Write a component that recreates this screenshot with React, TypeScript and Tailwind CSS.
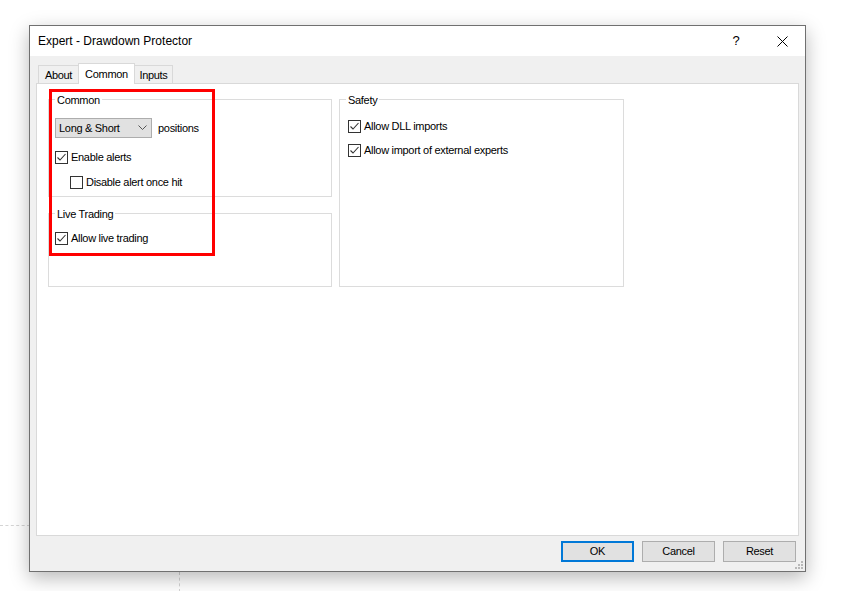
const font = "font-['Liberation_Sans',Arial,sans-serif]";

function CheckBox({ checked, label }: { checked?: boolean; label: string }) {
  return (
    <div className="flex items-center h-[13px]">
      <div className="w-[13px] h-[13px] border border-[#333333] bg-white flex items-center justify-center shrink-0">
        {checked && (
          <svg width="11" height="11" viewBox="0 0 11 11">
            <polyline points="1.5,5.5 4,8 9.5,2" fill="none" stroke="#333333" strokeWidth="1.1" />
          </svg>
        )}
      </div>
      <span className="ml-[3px] text-[11px] tracking-[-0.3px] text-black leading-none">{label}</span>
    </div>
  );
}

function GroupBox({
  title,
  className,
  children,
}: {
  title: string;
  className?: string;
  children?: React.ReactNode;
}) {
  return (
    <div className={"relative border border-[#dcdcdc] " + (className ?? "")}>
      <span className="absolute -top-[6px] left-[6px] bg-white px-[2px] text-[11px] tracking-[-0.3px] leading-[13px] text-black">
        {title}
      </span>
      {children}
    </div>
  );
}

export default function App() {
  return (
    <div className={"relative w-[863px] h-[591px] bg-white overflow-hidden " + font}>
      {/* desktop guide lines behind the dialog */}
      <div className="absolute left-0 top-[525px] w-[30px] border-t border-dashed border-[#d4d4d4]" />
      <div className="absolute left-[179px] top-[572px] h-[20px] border-l border-dashed border-[#d4d4d4]" />

      <div className="relative ml-[29px] mt-[25px] w-[777px] h-[547px] border border-[#707070] bg-[#f0f0f0] flex flex-col shadow-[0_6px_18px_rgba(0,0,0,0.28)]">
        {/* title bar */}
        <div className="h-[30px] bg-white flex items-center shrink-0">
          <span className="ml-[8px] text-[12px] text-black">Expert - Drawdown Protector</span>
          <div className="ml-auto flex items-center">
            <span className="w-[46px] text-center text-[13px] text-black">?</span>
            <div className="w-[46px] flex justify-center">
              <svg width="11" height="11" viewBox="0 0 11 11">
                <path d="M0.5 0.5 L10.5 10.5 M10.5 0.5 L0.5 10.5" stroke="#000" strokeWidth="1" />
              </svg>
            </div>
          </div>
        </div>

        {/* tabs */}
        <div className="flex items-end pt-[7px] pl-[8px] h-[27px] shrink-0">
          <div className="w-[41px] h-[18px] border border-b-0 border-[#d9d9d9] bg-[#f0f0f0] flex items-center justify-center pt-[1px] text-[11px] tracking-[-0.3px]">
            About
          </div>
          <div className="relative z-10 -ml-px w-[57px] h-[21px] -mb-px border border-b-0 border-[#d9d9d9] bg-white flex justify-center pt-[2px] text-[11px] tracking-[-0.3px]">
            Common
          </div>
          <div className="-ml-px w-[39px] h-[18px] border border-b-0 border-[#d9d9d9] bg-[#f0f0f0] flex items-center justify-center pt-[1px] text-[11px] tracking-[-0.3px]">
            Inputs
          </div>
        </div>

        {/* tab panel */}
        <div className="mx-[6px] h-[453px] bg-white border border-[#d9d9d9] flex gap-[7px] pl-[11px] pt-[15px]">
          <div className="flex flex-col gap-[16px] w-[284px]">
            <GroupBox title="Common" className="h-[98px] pl-[6px] pt-[18px]">
              <div className="flex items-center">
                <div className="w-[97px] h-[20px] bg-[#e1e1e1] border border-[#adadad] flex items-center pl-[3px] pr-[4px]">
                  <span className="text-[11px] tracking-[-0.3px]">Long &amp; Short</span>
                  <svg className="ml-auto" width="9" height="6" viewBox="0 0 9 6">
                    <polyline points="0.5,0.5 4.5,4.5 8.5,0.5" fill="none" stroke="#555" strokeWidth="1" />
                  </svg>
                </div>
                <span className="ml-[6px] text-[11px] tracking-[-0.3px]">positions</span>
              </div>
              <div className="mt-[13px]">
                <CheckBox checked label="Enable alerts" />
              </div>
              <div className="mt-[12px] ml-[15px]">
                <CheckBox label="Disable alert once hit" />
              </div>
            </GroupBox>
            <GroupBox title="Live Trading" className="h-[74px] pl-[6px] pt-[18px]">
              <CheckBox checked label="Allow live trading" />
            </GroupBox>
          </div>
          <GroupBox title="Safety" className="w-[285px] h-[188px] pl-[8px] pt-[20px]">
            <div className="flex flex-col gap-[11px]">
              <CheckBox checked label="Allow DLL imports" />
              <CheckBox checked label="Allow import of external experts" />
            </div>
          </GroupBox>
        </div>

        {/* buttons */}
        <div className="flex justify-end gap-[8px] pr-[9px] pt-[5px]">
          <button className="w-[73px] h-[21px] bg-[#e1e1e1] border-2 border-[#0078d7] text-[11px] tracking-[-0.3px]">OK</button>
          <button className="w-[73px] h-[21px] bg-[#e1e1e1] border border-[#adadad] text-[11px] tracking-[-0.3px]">Cancel</button>
          <button className="w-[73px] h-[21px] bg-[#e1e1e1] border border-[#adadad] text-[11px] tracking-[-0.3px]">Reset</button>
        </div>

        {/* resize grip */}
        <svg className="absolute right-[1px] bottom-[1px]" width="9" height="9" viewBox="0 0 9 9">
          <rect x="6" y="0" width="2" height="2" fill="#b8b8b8" />
          <rect x="3" y="3" width="2" height="2" fill="#b8b8b8" />
          <rect x="6" y="3" width="2" height="2" fill="#b8b8b8" />
          <rect x="0" y="6" width="2" height="2" fill="#b8b8b8" />
          <rect x="3" y="6" width="2" height="2" fill="#b8b8b8" />
          <rect x="6" y="6" width="2" height="2" fill="#b8b8b8" />
        </svg>
      </div>

      {/* red annotation frame */}
      <div className="absolute left-[49px] top-[89px] w-[166px] h-[167px] border-[3px] border-[#ff0000]" />
    </div>
  );
}
